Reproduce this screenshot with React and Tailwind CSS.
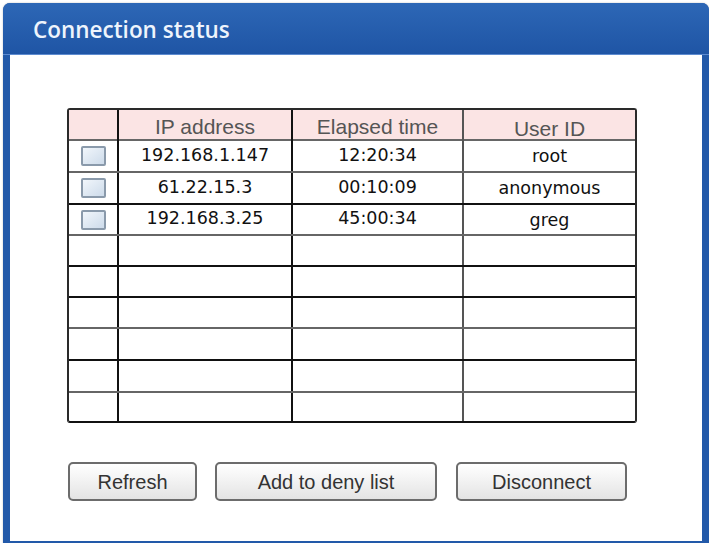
import React from "react";

const rows = [
  { ip: "192.168.1.147", time: "12:20:34", user: "root", line: "border-[#666]", h: "h-[32px]" },
  { ip: "61.22.15.3", time: "00:10:09", user: "anonymous", line: "border-[#666]", h: "h-[32px]" },
  { ip: "192.168.3.25", time: "45:00:34", user: "greg", line: "border-[#111]", h: "h-[31px]" },
  { line: "border-[#666]", h: "h-[31px]" },
  { line: "border-[#111]", h: "h-[31px]" },
  { line: "border-[#111]", h: "h-[31px]" },
  { line: "border-[#666]", h: "h-[32px]" },
  { line: "border-[#111]", h: "h-[32px]" },
  { line: "border-[#666]", h: "h-[30px]" },
];

function Checkbox() {
  return (
    <span className="block w-[25px] h-[20px] rounded-[2px] border-2 border-[#8a9aab] bg-gradient-to-br from-[#f1f6fb] to-[#cddbea]" />
  );
}

function Button({ label, width }) {
  return (
    <button
      className={`${width} h-[39px] rounded-[5px] border-2 border-[#6c6c6c] bg-gradient-to-b from-[#ffffff] to-[#e4e4e4] text-[20px] text-[#333] font-['Liberation_Sans',Arial,sans-serif]`}
    >
      {label}
    </button>
  );
}

export default function App() {
  return (
    <div className="w-[709px] h-[543px] overflow-hidden bg-white pt-[3px] pl-[3px]">
      <div className="w-[706px] h-[545px] flex flex-col rounded-t-[7px] bg-[#2259a9] shadow-[0_0_2px_rgba(0,0,0,0.25)]">
        {/* Title bar */}
        <div className="h-[52px] flex items-center pl-[30px] pt-[3px] rounded-t-[7px] bg-gradient-to-b from-[#2d67b6] to-[#1f55a5] border-b border-[#5d8bd0]">
          <span className="text-[22.5px] font-semibold text-[#eef4fc] font-['Open_Sans',sans-serif]">
            Connection status
          </span>
        </div>

        {/* Body */}
        <div className="flex-1 mx-[7px] mb-[7px] bg-white flex flex-col">
          <div className="mt-[53px] ml-[57px] w-[570px] border-2 border-[#2a2a2a] border-b-[#111] rounded-[3px]">
            <div className="grid grid-cols-[48px_174px_171px_173px] h-[29px] bg-[#fbe4e4] text-[21px] text-[#555] font-['Liberation_Sans',Arial,sans-serif]">
              <div />
              <div className="border-l-2 border-[#111] flex items-center justify-center pb-[2px]">IP address</div>
              <div className="border-l-2 border-[#111] flex items-center justify-center pb-[2px]">Elapsed time</div>
              <div className="border-l-2 border-[#555] flex items-center justify-center pt-[3px]">User ID</div>
            </div>
            {rows.map((r, i) => (
              <div
                key={i}
                className={`grid grid-cols-[48px_174px_171px_173px] ${r.h} border-t-2 ${r.line} text-[17.5px] text-[#111] font-['DejaVu_Sans',sans-serif]`}
              >
                <div className="flex items-center justify-center">{r.ip && <Checkbox />}</div>
                <div className="border-l-2 border-[#111] flex items-center justify-center pb-[2px]">{r.ip}</div>
                <div className="border-l-2 border-[#111] flex items-center justify-center pb-[2px]">{r.time}</div>
                <div className="border-l-2 border-[#555] flex items-center justify-center pt-[1px]">{r.user}</div>
              </div>
            ))}
          </div>

          <div className="mt-[39px] ml-[58px] flex gap-[18px]">
            <Button label="Refresh" width="w-[129px]" />
            <Button label="Add to deny list" width="w-[222px]" />
            <div className="ml-px">
              <Button label="Disconnect" width="w-[171px]" />
            </div>
          </div>
        </div>
      </div>
    </div>
  );
}
